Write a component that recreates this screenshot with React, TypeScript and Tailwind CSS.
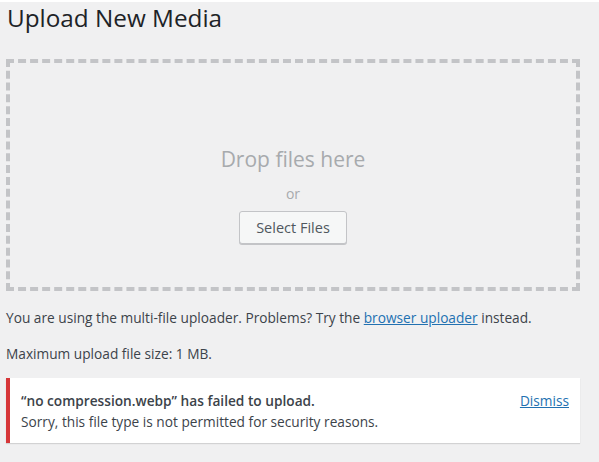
export default function App() {
    return (
        <div className="min-h-[462px] w-full bg-[#f0f0f1] pl-[6px] pr-[19px] font-['Open_Sans',sans-serif] text-[#3c434a]">
            <h1 className="mt-[2px] pl-[1px] text-[24.3px] font-normal leading-[31px] text-[#1d2327]">
                Upload New Media
            </h1>

            <div className="mt-[26px] flex h-[232px] flex-col items-center border-4 border-dashed border-[#c3c4c7] pt-[82px]">
                <p className="text-[21px] leading-[28px] text-[#a7aaad]">Drop files here</p>
                <p className="mt-[11px] text-[14px] leading-[20px] text-[#a7aaad]">or</p>
                <button
                    type="button"
                    className="mt-[7px] h-[33px] w-[108px] rounded-[3px] border border-[#c3c4c7] bg-[#f6f7f7] text-[14.5px] text-[#50575e] shadow-[0_1px_0_#c3c4c7]"
                >
                    Select Files
                </button>
            </div>

            <p className="mt-[17px] text-[13.7px] leading-[20px]">
                You are using the multi-file uploader. Problems? Try the{" "}
                <a href="#" className="text-[#2271b1] underline">
                    browser uploader
                </a>{" "}
                instead.
            </p>
            <p className="mt-[16px] text-[13.7px] leading-[20px]">Maximum upload file size: 1 MB.</p>

            <div className="mt-[14px] flex items-start justify-between border-l-4 border-[#d63638] bg-white pb-[11px] pl-[11px] pr-[11px] pt-[13px] shadow-[0_1px_1px_rgba(0,0,0,0.12)]">
                <div className="text-[13.7px]">
                    <p className="font-semibold leading-[20px] text-[#3c434a]">
                        “no compression.webp” has failed to upload.
                    </p>
                    <p className="mt-[1px] leading-[20px]">
                        Sorry, this file type is not permitted for security reasons.
                    </p>
                </div>
                <a href="#" className="text-[13.7px] leading-[20px] text-[#2271b1] underline">
                    Dismiss
                </a>
            </div>
        </div>
    );
}
